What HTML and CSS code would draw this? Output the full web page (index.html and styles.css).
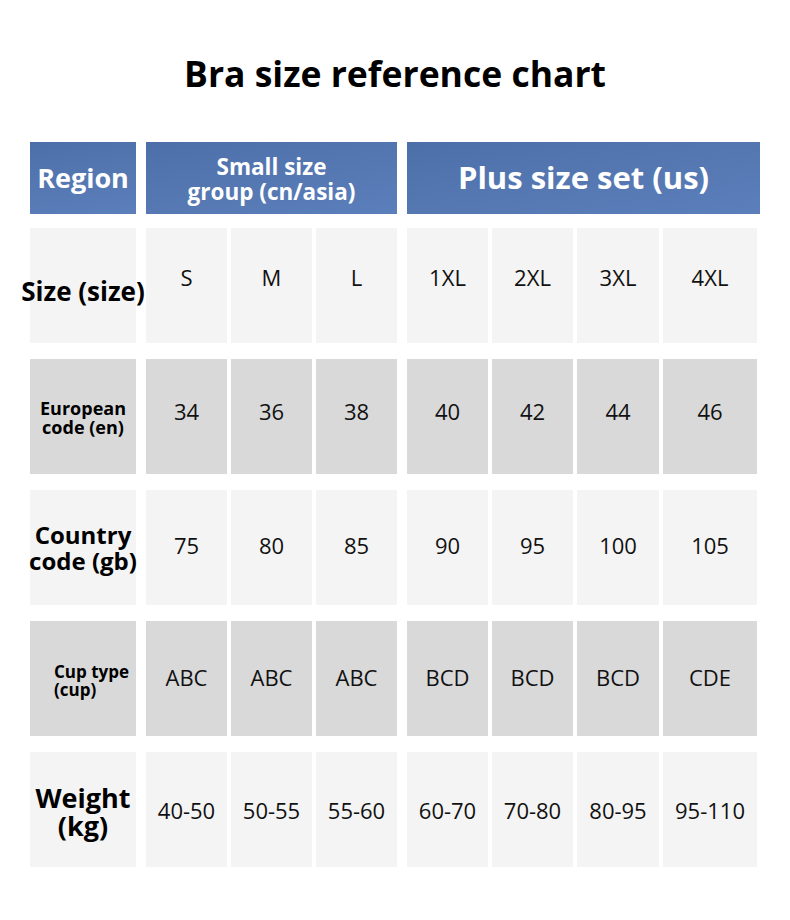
FILE: index.html
```html
<!DOCTYPE html>
<html>
<head>
<meta charset="utf-8">
<link rel="stylesheet" href="styles.css">
</head>
<body>
<div class="page">
  <h1 class="title">Bra size reference chart</h1>
  <div class="chart">
    <div class="row head">
      <div class="hcell hlabel">Region</div>
      <div class="hcell hsmall">Small size<br>group (cn/asia)</div>
      <div class="hcell hplus">Plus size set (us)</div>
    </div>

    <div class="row light r-size">
      <div class="label l-size">Size (size)</div>
      <div class="group">
        <div class="cell">S</div><div class="cell">M</div><div class="cell">L</div>
      </div>
      <div class="group plus">
        <div class="cell">1XL</div><div class="cell">2XL</div><div class="cell">3XL</div><div class="cell">4XL</div>
      </div>
    </div>

    <div class="row dark r-eu">
      <div class="label l-eu">European<br>code (en)</div>
      <div class="group">
        <div class="cell">34</div><div class="cell">36</div><div class="cell">38</div>
      </div>
      <div class="group plus">
        <div class="cell">40</div><div class="cell">42</div><div class="cell">44</div><div class="cell">46</div>
      </div>
    </div>

    <div class="row light r-country">
      <div class="label l-country">Country<br>code (gb)</div>
      <div class="group">
        <div class="cell">75</div><div class="cell">80</div><div class="cell">85</div>
      </div>
      <div class="group plus">
        <div class="cell">90</div><div class="cell">95</div><div class="cell">100</div><div class="cell">105</div>
      </div>
    </div>

    <div class="row dark r-cup">
      <div class="label l-cup">Cup type<br>(cup)</div>
      <div class="group">
        <div class="cell">ABC</div><div class="cell">ABC</div><div class="cell">ABC</div>
      </div>
      <div class="group plus">
        <div class="cell">BCD</div><div class="cell">BCD</div><div class="cell">BCD</div><div class="cell">CDE</div>
      </div>
    </div>

    <div class="row light">
      <div class="label l-weight">Weight<br>(kg)</div>
      <div class="group">
        <div class="cell">40-50</div><div class="cell">50-55</div><div class="cell">55-60</div>
      </div>
      <div class="group plus">
        <div class="cell">60-70</div><div class="cell">70-80</div><div class="cell">80-95</div><div class="cell">95-110</div>
      </div>
    </div>
  </div>
</div>
</body>
</html>
```

FILE: styles.css
```css
* { box-sizing: border-box; }
html, body { margin: 0; padding: 0; background: #ffffff; }
body {
  font-family: "Open Sans", "Noto Sans", sans-serif;
  color: #111;
  width: 790px;
  height: 920px;
  overflow: hidden;
}
.page { padding: 50px 0 0 0; }
.title {
  margin: 0;
  font-size: 35.5px;
  line-height: 46px;
  font-weight: 700;
  color: #000;
  text-align: center;
}
.chart {
  margin-top: 46px;
  padding-left: 30px;
  display: flex;
  flex-direction: column;
  gap: 16px;
}
.row { display: flex; height: 115px; }
.row.head { height: 72px; margin-bottom: -2px; }
.hcell {
  background: linear-gradient(170deg, #4d6fa9 0%, #5679b4 60%, #5b7fbb 100%);
  color: #fff;
  font-weight: 700;
  display: flex;
  align-items: center;
  justify-content: center;
  text-align: center;
  white-space: nowrap;
}
.hlabel { width: 106px; font-size: 27px; padding-bottom: 1px; }
.hsmall { width: 251px; margin-left: 10px; font-size: 22.5px; line-height: 25px; padding-top: 2px; }
.hplus { width: 353px; margin-left: 10px; font-size: 31px; padding-bottom: 2px; }

.group { display: flex; gap: 4px; margin-left: 10px; }
.cell {
  width: 81px;
  display: flex;
  align-items: center;
  justify-content: center;
  font-size: 22px;
  color: #111;
}
.plus .cell:nth-child(3) { width: 82px; }
.plus .cell:nth-child(4) { width: 94px; }
.light .cell, .light .label { background: #f4f4f4; }
.dark .cell, .dark .label { background: #d9d9d9; }

.r-size .cell { padding-bottom: 17px; }
.r-eu .cell { padding-bottom: 12px; }
.r-country .cell { padding-bottom: 6px; }
.r-cup .cell { padding-bottom: 3px; }

.label {
  width: 106px;
  display: flex;
  align-items: center;
  justify-content: center;
  text-align: center;
  font-weight: 700;
  color: #000;
  white-space: nowrap;
}
.l-size { font-size: 26px; padding-top: 10px; }
.l-eu { font-size: 18px; line-height: 19px; padding-top: 3px; }
.l-country { font-size: 24px; line-height: 26px; padding-top: 0px; }
.l-cup { font-size: 17px; line-height: 18px; justify-content: flex-start; text-align: left; padding-left: 24px; padding-top: 4px; }
.l-weight { font-size: 27px; line-height: 28px; padding-top: 4px; }
```
